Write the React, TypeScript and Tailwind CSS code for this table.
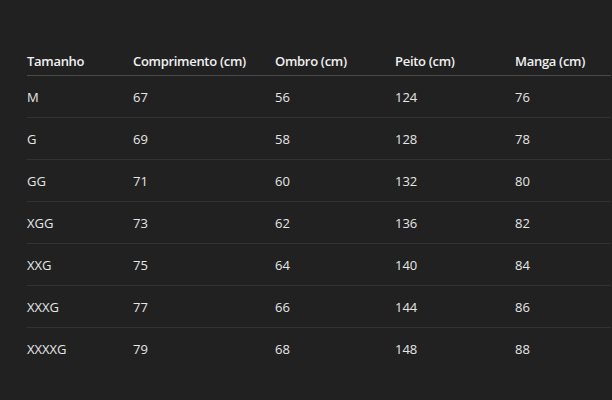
import React from "react";

const rows = [
  ["M", "67", "56", "124", "76"],
  ["G", "69", "58", "128", "78"],
  ["GG", "71", "60", "132", "80"],
  ["XGG", "73", "62", "136", "82"],
  ["XXG", "75", "64", "140", "84"],
  ["XXXG", "77", "66", "144", "86"],
  ["XXXXG", "79", "68", "148", "88"],
];

const headers = ["Tamanho", "Comprimento (cm)", "Ombro (cm)", "Peito (cm)", "Manga (cm)"];

export default function App() {
  return (
    <div
      className="w-[612px] h-[400px] bg-[#212121] overflow-hidden pt-[47px] pl-[27px]"
      style={{ fontFamily: '"Open Sans", "Noto Sans", sans-serif' }}
    >
      <table className="w-[584px] table-fixed border-collapse text-[13px] leading-[18px]">
        <colgroup>
          <col className="w-[106px]" />
          <col className="w-[142px]" />
          <col className="w-[120px]" />
          <col className="w-[120px]" />
          <col className="w-[96px]" />
        </colgroup>
        <thead>
          <tr className="border-b border-[#4a4a4a]">
            {headers.map((h) => (
              <th key={h} className="text-left font-semibold tracking-[-0.3px] text-[#f0f0f0] h-[28px] p-0 align-middle whitespace-nowrap">
                {h}
              </th>
            ))}
          </tr>
        </thead>
        <tbody>
          {rows.map((r, i) => (
            <tr key={i} className={i < rows.length - 1 ? "border-b border-[#323232]" : ""}>
              {r.map((c, j) => (
                <td key={j} className="text-left text-[#e6e6e6] h-[42px] p-0 pt-[1px] align-middle">
                  {c}
                </td>
              ))}
            </tr>
          ))}
        </tbody>
      </table>
    </div>
  );
}
